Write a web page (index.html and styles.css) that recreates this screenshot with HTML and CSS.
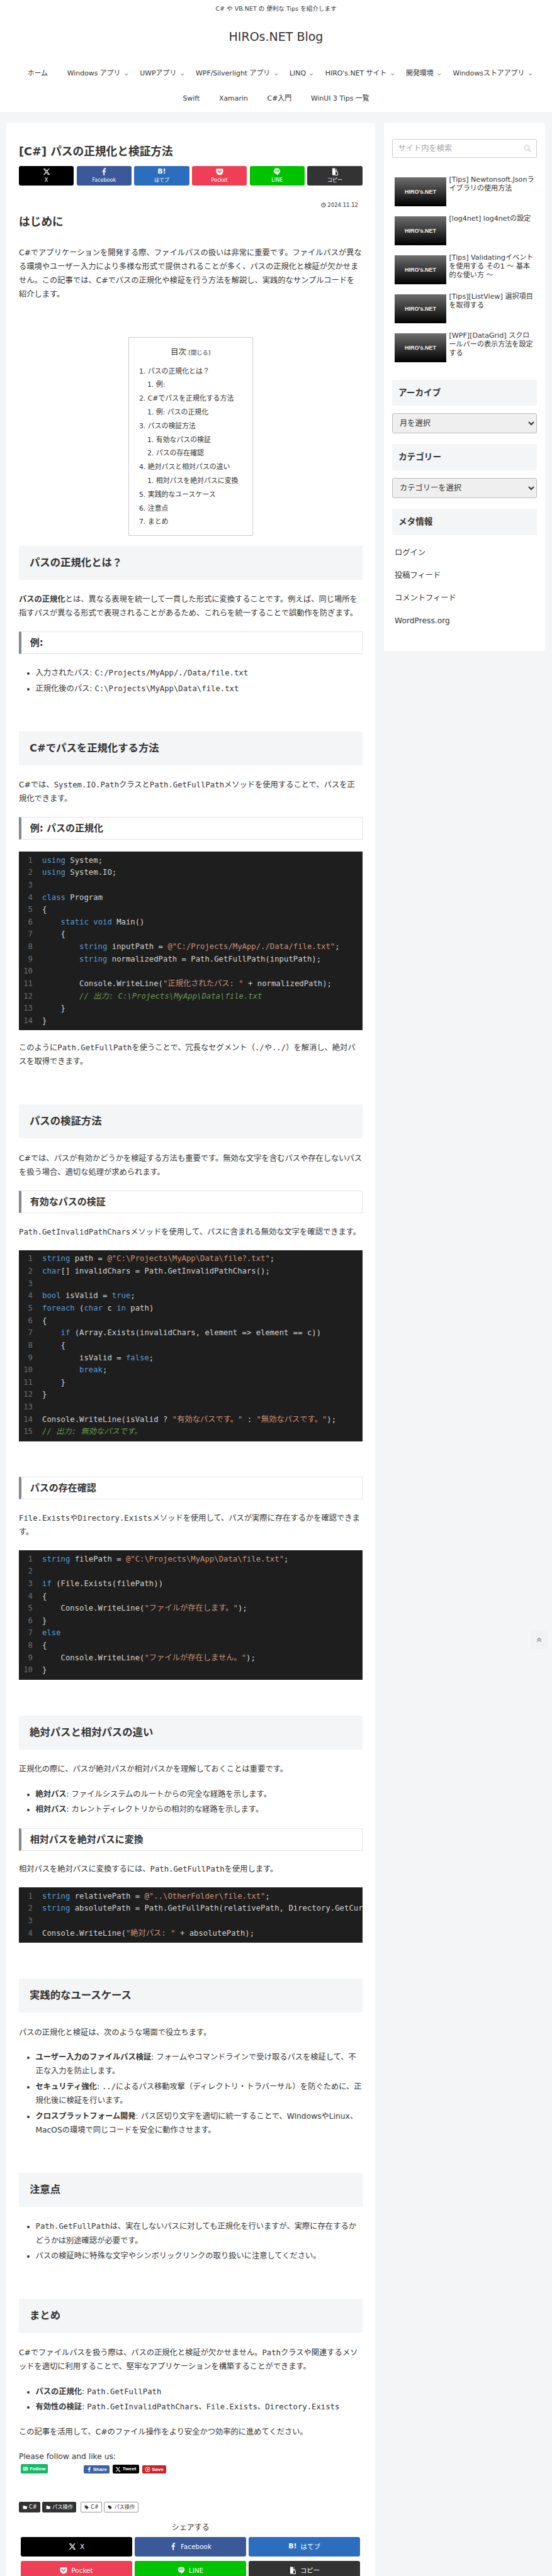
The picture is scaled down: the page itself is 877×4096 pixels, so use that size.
FILE: index.html
```html
<!DOCTYPE html>
<html lang="ja">
<head>
    <meta charset="UTF-8">
    <meta name="viewport" content="width=device-width, initial-scale=1.0">
    <title>[C#] パスの正規化と検証方法 | HIROs.NET Blog</title>
    <link rel="stylesheet" href="styles.css">
</head>
<body>
    <!-- icons used more than once -->
    <svg class="sprite" xmlns="http://www.w3.org/2000/svg">
        <symbol id="i-x" viewBox="0 0 24 24"><path fill="currentColor" d="M18.24 2.25h3.31l-7.23 8.26 8.5 11.24h-6.65l-5.21-6.82-5.97 6.82H1.68l7.73-8.84L1.25 2.25h6.83l4.71 6.23zm-1.16 17.52h1.83L7.08 4.13H5.12z"/></symbol>
        <symbol id="i-fb" viewBox="0 0 24 24"><path fill="currentColor" d="M14.2 23.5V13.1h3.4l.6-4.2h-4V6.4c0-1.2.4-2 2.1-2h2.1V.7C18 .6 16.9.5 15.6.5c-3 0-5.1 1.9-5.1 5.2v3.2H7v4.2h3.5v10.4z"/></symbol>
        <symbol id="i-pocket" viewBox="0 0 24 24"><path fill="currentColor" d="M3.5 2.5h17A2.5 2.5 0 0 1 23 5v6.5a11 11 0 0 1-22 0V5a2.500 2.500 0 0 1 2.500-2.500z"/><path fill="none" stroke="#ef3f56" stroke-width="3.2" stroke-linecap="round" stroke-linejoin="round" d="M7 9.500l5 5 5-5"/></symbol>
        <symbol id="i-line" viewBox="0 0 24 24"><path fill="currentColor" d="M12 1c6 0 10.500 3.900 10.500 9 0 5-5.500 9.500-10.500 13 .5-2 .3-3.300-.8-3.700C6 18.800 1.500 15 1.500 10 1.500 4.900 6 1 12 1z"/><text x="12" y="12.500" text-anchor="middle" class="line-mark">LINE</text></symbol>
        <symbol id="i-copy" viewBox="0 0 24 24"><path fill="currentColor" d="M4 1h9v7h6v3h-7v12H4z"/><path fill="none" stroke="currentColor" stroke-width="2" d="M13 12h6l2 2v9h-8z"/><path fill="currentColor" d="M15 2l4 4h-4z"/></symbol>
        <symbol id="i-folder" viewBox="0 0 24 24"><path fill="currentColor" d="M2 5a2 2 0 0 1 2-2h5l3 3h8a2 2 0 0 1 2 2v11a2 2 0 0 1-2 2H4a2 2 0 0 1-2-2z"/></symbol>
        <symbol id="i-tag" viewBox="0 0 24 24"><path fill="currentColor" d="M2 3h10l10 10-9 9L2 12z"/></symbol>
    </svg>

    <header class="site-header">
        <p class="tagline">C# や VB.NET の 便利な Tips を紹介します</p>
        <div class="logo">HIROs.NET Blog</div>
        <nav class="nav">
            <a class="nav-item">ホーム</a>
            <a class="nav-item has-sub">Windows アプリ</a>
            <a class="nav-item has-sub">UWPアプリ</a>
            <a class="nav-item has-sub">WPF/Silverlight アプリ</a>
            <a class="nav-item has-sub">LINQ</a>
            <a class="nav-item has-sub">HIRO's.NET サイト</a>
            <a class="nav-item has-sub">開発環境</a>
            <a class="nav-item has-sub">Windowsストアアプリ</a>
            <a class="nav-item">Swift</a>
            <a class="nav-item">Xamarin</a>
            <a class="nav-item">C#入門</a>
            <a class="nav-item">WinUI 3 Tips 一覧</a>
        </nav>
    </header>

    <div class="wrap">
        <main class="main">
            <h1 class="entry-title">[C#] パスの正規化と検証方法</h1>

            <div class="sns-top">
                <a class="sns-btn x"><svg><use href="#i-x"/></svg><span>X</span></a>
                <a class="sns-btn fb"><svg><use href="#i-fb"/></svg><span>Facebook</span></a>
                <a class="sns-btn hb"><b>B!</b><span>はてブ</span></a>
                <a class="sns-btn pk"><svg><use href="#i-pocket"/></svg><span>Pocket</span></a>
                <a class="sns-btn ln"><svg><use href="#i-line"/></svg><span>LINE</span></a>
                <a class="sns-btn cp"><svg><use href="#i-copy"/></svg><span>コピー</span></a>
            </div>

            <div class="post-date">
                <svg viewBox="0 0 24 24"><circle cx="12" cy="12" r="9.500" fill="none" stroke="currentColor" stroke-width="3"/><path fill="none" stroke="currentColor" stroke-width="2.500" d="M12 5v7h5"/></svg>
                2024.11.12
            </div>

            <h2 class="intro-title">はじめに</h2>
            <p>C#でアプリケーションを開発する際、ファイルパスの扱いは非常に重要です。ファイルパスが異なる環境やユーザー入力により多様な形式で提供されることが多く、パスの正規化と検証が欠かせません。この記事では、C#でパスの正規化や検証を行う方法を解説し、実践的なサンプルコードを紹介します。</p>

            <div class="toc">
                <div class="toc-title">目次 <small>[閉じる]</small></div>
                <ol>
                    <li>パスの正規化とは？
                        <ol><li>例:</li></ol>
                    </li>
                    <li>C#でパスを正規化する方法
                        <ol><li>例: パスの正規化</li></ol>
                    </li>
                    <li>パスの検証方法
                        <ol><li>有効なパスの検証</li><li>パスの存在確認</li></ol>
                    </li>
                    <li>絶対パスと相対パスの違い
                        <ol><li>相対パスを絶対パスに変換</li></ol>
                    </li>
                    <li>実践的なユースケース</li>
                    <li>注意点</li>
                    <li>まとめ</li>
                </ol>
            </div>

            <h2 class="section first">パスの正規化とは？</h2>
            <p><strong>パスの正規化</strong>とは、異なる表現を統一して一貫した形式に変換することです。例えば、同じ場所を指すパスが異なる形式で表現されることがあるため、これらを統一することで誤動作を防ぎます。</p>

            <h3 class="sub">例:</h3>
            <ul>
                <li>入力されたパス: <code>C:/Projects/MyApp/./Data/file.txt</code></li>
                <li>正規化後のパス: <code>C:\Projects\MyApp\Data\file.txt</code></li>
            </ul>

            <h2 class="section">C#でパスを正規化する方法</h2>
            <p>C#では、<code>System.IO.Path</code>クラスと<code>Path.GetFullPath</code>メソッドを使用することで、パスを正規化できます。</p>

            <h3 class="sub">例: パスの正規化</h3>
            <div class="code-block">
                <div class="nums">1<br>2<br>3<br>4<br>5<br>6<br>7<br>8<br>9<br>10<br>11<br>12<br>13<br>14</div>
<pre><span class="k">using</span> System;
<span class="k">using</span> System.IO;

<span class="k">class</span> Program
{
    <span class="k">static</span> <span class="k">void</span> Main()
    {
        <span class="k">string</span> inputPath = <span class="s">@"C:/Projects/MyApp/./Data/file.txt"</span>;
        <span class="k">string</span> normalizedPath = Path.GetFullPath(inputPath);

        Console.WriteLine(<span class="s">"正規化されたパス: "</span> + normalizedPath);
        <span class="c">// 出力: C:\Projects\MyApp\Data\file.txt</span>
    }
}</pre>
            </div>
            <p>このように<code>Path.GetFullPath</code>を使うことで、冗長なセグメント（<code>./</code>や<code>../</code>）を解消し、絶対パスを取得できます。</p>

            <h2 class="section">パスの検証方法</h2>
            <p>C#では、パスが有効かどうかを検証する方法も重要です。無効な文字を含むパスや存在しないパスを扱う場合、適切な処理が求められます。</p>

            <h3 class="sub">有効なパスの検証</h3>
            <p><code>Path.GetInvalidPathChars</code>メソッドを使用して、パスに含まれる無効な文字を確認できます。</p>
            <div class="code-block">
                <div class="nums">1<br>2<br>3<br>4<br>5<br>6<br>7<br>8<br>9<br>10<br>11<br>12<br>13<br>14<br>15</div>
<pre><span class="k">string</span> path = <span class="s">@"C:\Projects\MyApp\Data\file?.txt"</span>;
<span class="k">char</span>[] invalidChars = Path.GetInvalidPathChars();

<span class="k">bool</span> isValid = <span class="k">true</span>;
<span class="k">foreach</span> (<span class="k">char</span> c <span class="k">in</span> path)
{
    <span class="k">if</span> (Array.Exists(invalidChars, element =&gt; element == c))
    {
        isValid = <span class="k">false</span>;
        <span class="k">break</span>;
    }
}

Console.WriteLine(isValid ? <span class="s">"有効なパスです。"</span> : <span class="s">"無効なパスです。"</span>);
<span class="c">// 出力: 無効なパスです。</span></pre>
            </div>

            <h3 class="sub spaced">パスの存在確認</h3>
            <p><code>File.Exists</code>や<code>Directory.Exists</code>メソッドを使用して、パスが実際に存在するかを確認できます。</p>
            <div class="code-block">
                <div class="nums">1<br>2<br>3<br>4<br>5<br>6<br>7<br>8<br>9<br>10</div>
<pre><span class="k">string</span> filePath = <span class="s">@"C:\Projects\MyApp\Data\file.txt"</span>;

<span class="k">if</span> (File.Exists(filePath))
{
    Console.WriteLine(<span class="s">"ファイルが存在します。"</span>);
}
<span class="k">else</span>
{
    Console.WriteLine(<span class="s">"ファイルが存在しません。"</span>);
}</pre>
            </div>

            <h2 class="section">絶対パスと相対パスの違い</h2>
            <p>正規化の際に、パスが絶対パスか相対パスかを理解しておくことは重要です。</p>
            <ul>
                <li><strong>絶対パス</strong>: ファイルシステムのルートからの完全な経路を示します。</li>
                <li><strong>相対パス</strong>: カレントディレクトリからの相対的な経路を示します。</li>
            </ul>

            <h3 class="sub">相対パスを絶対パスに変換</h3>
            <p>相対パスを絶対パスに変換するには、<code>Path.GetFullPath</code>を使用します。</p>
            <div class="code-block">
                <div class="nums">1<br>2<br>3<br>4</div>
<pre><span class="k">string</span> relativePath = <span class="s">@"..\OtherFolder\file.txt"</span>;
<span class="k">string</span> absolutePath = Path.GetFullPath(relativePath, Directory.GetCurrentDirectory());

Console.WriteLine(<span class="s">"絶対パス: "</span> + absolutePath);</pre>
            </div>

            <h2 class="section">実践的なユースケース</h2>
            <p>パスの正規化と検証は、次のような場面で役立ちます。</p>
            <ul>
                <li><strong>ユーザー入力のファイルパス検証</strong>: フォームやコマンドラインで受け取るパスを検証して、不正な入力を防止します。</li>
                <li><strong>セキュリティ強化</strong>: <code>../</code>によるパス移動攻撃（ディレクトリ・トラバーサル）を防ぐために、正規化後に検証を行います。</li>
                <li><strong>クロスプラットフォーム開発</strong>: パス区切り文字を適切に統一することで、WindowsやLinux、MacOSの環境で同じコードを安全に動作させます。</li>
            </ul>

            <h2 class="section">注意点</h2>
            <ul>
                <li><code>Path.GetFullPath</code>は、実在しないパスに対しても正規化を行いますが、実際に存在するかどうかは別途確認が必要です。</li>
                <li>パスの検証時に特殊な文字やシンボリックリンクの取り扱いに注意してください。</li>
            </ul>

            <h2 class="section">まとめ</h2>
            <p>C#でファイルパスを扱う際は、パスの正規化と検証が欠かせません。<code>Path</code>クラスや関連するメソッドを適切に利用することで、堅牢なアプリケーションを構築することができます。</p>
            <ul>
                <li><strong>パスの正規化</strong>: <code>Path.GetFullPath</code></li>
                <li><strong>有効性の検証</strong>: <code>Path.GetInvalidPathChars</code>、<code>File.Exists</code>、<code>Directory.Exists</code></li>
            </ul>
            <p>この記事を活用して、C#のファイル操作をより安全かつ効率的に進めてください。</p>
            <p class="follow-label">Please follow and like us:</p>

            <div class="follow-row">
                <a class="follow-btn mail">
                    <svg viewBox="0 0 24 24"><path fill="#d7f7e4" d="M1 4h22v16H1z"/><path fill="none" stroke="#14b866" stroke-width="2" d="M1 5l11 9 11-9M1 19l8-7M23 19l-8-7"/></svg>
                    Follow
                </a>
                <a class="follow-btn share"><svg><use href="#i-fb"/></svg>Share</a>
                <a class="follow-btn tweet"><svg><use href="#i-x"/></svg>Tweet</a>
                <a class="follow-btn save">
                    <svg viewBox="0 0 24 24"><circle cx="12" cy="12" r="10" fill="none" stroke="currentColor" stroke-width="2.500"/><path fill="none" stroke="currentColor" stroke-width="2.500" d="M10 20l2.500-10M8.500 12c-1-4 6-6 7.500-2 1 3-3 6-5 3"/></svg>
                    Save
                </a>
            </div>

            <div class="taxonomy">
                <a class="cat"><svg><use href="#i-folder"/></svg>C#</a>
                <a class="cat"><svg><use href="#i-folder"/></svg>パス操作</a>
                <a class="tag first-tag"><svg><use href="#i-tag"/></svg>C#</a>
                <a class="tag"><svg><use href="#i-tag"/></svg>パス操作</a>
            </div>

            <div class="share-label">シェアする</div>
            <div class="sns-bottom">
                <a class="sns-wide x"><svg><use href="#i-x"/></svg>X</a>
                <a class="sns-wide fb"><svg><use href="#i-fb"/></svg>Facebook</a>
                <a class="sns-wide hb"><b>B!</b>はてブ</a>
                <a class="sns-wide pk"><svg><use href="#i-pocket"/></svg>Pocket</a>
                <a class="sns-wide ln"><svg><use href="#i-line"/></svg>LINE</a>
                <a class="sns-wide cp"><svg><use href="#i-copy"/></svg>コピー</a>
            </div>
        </main>

        <aside class="sidebar">
            <div class="search">
                <span>サイト内を検索</span>
                <svg viewBox="0 0 24 24"><circle cx="10" cy="10" r="7.500" fill="none" stroke="currentColor" stroke-width="4"/><path stroke="currentColor" stroke-width="5" stroke-linecap="round" d="M16 16l5 5"/></svg>
            </div>

            <div class="recent">
                <a class="recent-item"><div class="thumb">HIRO's.NET</div><div class="recent-text">[Tips] Newtonsoft.Jsonライブラリの使用方法</div></a>
                <a class="recent-item"><div class="thumb">HIRO's.NET</div><div class="recent-text">[log4net] log4netの設定</div></a>
                <a class="recent-item"><div class="thumb">HIRO's.NET</div><div class="recent-text">[Tips] Validatingイベントを使用する その1 ～ 基本的な使い方 ～</div></a>
                <a class="recent-item"><div class="thumb">HIRO's.NET</div><div class="recent-text">[Tips][ListView] 選択項目を取得する</div></a>
                <a class="recent-item"><div class="thumb">HIRO's.NET</div><div class="recent-text">[WPF][DataGrid] スクロールバーの表示方法を設定する</div></a>
            </div>

            <h3 class="widget-title">アーカイブ</h3>
            <select class="widget-select"><option>月を選択</option></select>

            <h3 class="widget-title">カテゴリー</h3>
            <select class="widget-select"><option>カテゴリーを選択</option></select>

            <h3 class="widget-title">メタ情報</h3>
            <ul class="meta-list">
                <li>ログイン</li>
                <li>投稿フィード</li>
                <li>コメントフィード</li>
                <li>WordPress.org</li>
            </ul>
        </aside>
    </div>

    <!-- go to top button -->
    <a class="go-top">
        <svg viewBox="0 0 24 24"><path fill="none" stroke="currentColor" stroke-width="3" d="M4 12l8-8 8 8M4 20l8-8 8 8"/></svg>
    </a>
</body>
</html>
```
FILE: styles.css
```css
html {
    height: 4096px;
    overflow: hidden;
}

body {
    margin: 0;
    height: 4096px;
    overflow: hidden;
    position: relative;
    background-color: #f4f5f7;
    color: #333;
    font-family: "DejaVu Sans", "Noto Sans CJK JP", sans-serif;
    font-size: 12.28px;
    line-height: 22.1px;
}

.sprite {
    display: none;
}

.line-mark {
    font-family: "Liberation Sans", sans-serif;
    font-size: 6px;
    font-weight: bold;
    fill: #00c300;
}

/* header */
.site-header {
    background-color: #fff;
    text-align: center;
}

.tagline {
    margin: 0;
    font-size: 9.55px;
    line-height: 27px;
}

.logo {
    font-size: 19px;
    line-height: 63.4px;
    padding-bottom: 6.1px;
}

.nav {
    display: flex;
    flex-wrap: wrap;
    justify-content: center;
    max-width: 856px;
    margin: 0 auto;
    font-size: 10.9px;
    line-height: 40.9px;
}

.nav-item {
    position: relative;
    padding: 0 15.4px;
}

.has-sub::after {
    content: "";
    position: absolute;
    right: 4.5px;
    top: 18.5px;
    width: 2.5px;
    height: 2.5px;
    border-right: 1px solid #888;
    border-bottom: 1px solid #888;
    transform: rotate(45deg);
}

/* columns */
.wrap {
    display: flex;
    align-items: flex-start;
    padding: 16.5px 0 0 9.5px;
}

.main {
    box-sizing: border-box;
    width: 586.5px;
    padding: 33px 20.5px 40px;
    background-color: #fff;
    border-radius: 4px;
}

.sidebar {
    box-sizing: border-box;
    width: 256px;
    height: 840px;
    margin-left: 14px;
    padding: 26.4px 13.5px 0 13px;
    background-color: #fff;
    border-radius: 4px;
}

/* article head */
.entry-title {
    margin: 0;
    font-size: 17.7px;
    line-height: 26px;
    font-weight: bold;
}

.sns-top {
    display: flex;
    gap: 4.5px;
    margin-top: 10.6px;
}

.sns-btn {
    flex: 1;
    display: flex;
    flex-direction: column;
    align-items: center;
    height: 30.4px;
    padding-top: 3px;
    box-sizing: border-box;
    border-radius: 3px;
    color: #fff;
    font-size: 8px;
    line-height: 11px;
}

.sns-btn svg {
    width: 12px;
    height: 12px;
    margin-bottom: 2px;
}

.sns-btn b {
    height: 12px;
    margin-bottom: 2px;
    font-size: 11px;
    line-height: 12px;
}

.x { background-color: #000; }
.fb { background-color: #3b5998; }
.hb { background-color: #2c6ebd; }
.pk { background-color: #ef3f56; }
.ln { background-color: #00c300; }
.cp { background-color: #333; }

.post-date {
    display: flex;
    justify-content: flex-end;
    align-items: center;
    gap: 2px;
    margin-top: 25px;
    padding-right: 6.5px;
    font-size: 8.5px;
    line-height: 12px;
}

.post-date svg {
    width: 8px;
    height: 8px;
}

.intro-title {
    margin: 9px 0 26px;
    font-size: 17.7px;
    line-height: 24px;
}

/* article body */
p {
    margin: 0 0 17.5px;
}

ul {
    margin: 0 0 17.5px;
    padding-left: 26.5px;
}

li + li {
    margin-top: 2.6px;
}

code {
    font-family: "DejaVu Sans Mono", "Noto Sans CJK JP", monospace;
    font-size: 12.28px;
}

.section {
    margin: 57px 0 20.5px;
    padding: 0 17px;
    height: 54px;
    border-radius: 2px;
    background-color: #f3f5f6;
    font-size: 16.37px;
    line-height: 54px;
}

.section.first {
    margin-top: 16px;
}

.sub {
    margin: 18px 0 18.5px;
    height: 36px;
    box-sizing: border-box;
    padding-left: 13.800px;
    border: 1px solid #e4e4e4;
    border-left: 4.7px solid #888;
    font-size: 15px;
    line-height: 34px;
}

.sub.spaced {
    margin-top: 56.5px;
}

/* table of contents */
.toc {
    box-sizing: border-box;
    width: 198px;
    height: 316px;
    margin: 56.6px auto 0;
    padding-top: 13px;
    border: 1px solid #ccc;
    font-size: 10.9px;
    line-height: 21.8px;
}

.toc-title {
    margin-bottom: 8px;
    text-align: center;
    font-size: 12.28px;
}

.toc-title small {
    font-size: 9.2px;
}

.toc ol {
    margin: 0;
    padding-left: 30px;
}

.toc ol ol {
    padding-left: 13px;
}

.toc li + li {
    margin-top: 0;
}

/* code */
.code-block {
    display: flex;
    margin: 18px 0 17px;
    padding: 4.7px 0;
    background-color: #1e1e1e;
    color: #d4d4d4;
    font-family: "DejaVu Sans Mono", "Noto Sans CJK JP", monospace;
    font-size: 12.28px;
    line-height: 19.64px;
}

.nums {
    flex: none;
    width: 22px;
    margin-right: 15px;
    text-align: right;
    color: #6e7070;
}

pre {
    flex: 1;
    min-width: 0;
    margin: 0;
    overflow: hidden;
    font: inherit;
}

.k { color: #569cd6; }
.s { color: #ce9178; }
.c { color: #6a9955; font-style: italic; }

/* follow buttons */
.follow-label {
    margin: 13px 0 1px;
}

.follow-row {
    display: flex;
    align-items: flex-start;
    margin-left: 3px;
}

.follow-btn {
    display: flex;
    align-items: center;
    justify-content: center;
    gap: 2px;
    width: 41.6px;
    height: 13px;
    margin-top: 2px;
    margin-left: 5px;
    border-radius: 2px;
    color: #fff;
    font-family: "Liberation Sans", sans-serif;
    font-size: 8px;
    font-weight: bold;
}

.follow-btn svg {
    width: 9px;
    height: 9px;
}

.mail {
    width: 42.6px;
    height: 15px;
    margin: 0 52px 0 0;
    background-color: #14b866;
}

.share { background-color: #3b5fa8; }
.tweet { background-color: #000; height: 14px; margin-top: 1px; }
.save { background-color: #cb2027; width: 38.5px; }

/* categories and tags */
.taxonomy {
    display: flex;
    gap: 3px;
    margin-top: 45px;
    font-size: 8.2px;
    line-height: 15px;
}

.cat,
.tag {
    display: flex;
    align-items: center;
    gap: 3px;
    height: 17px;
    box-sizing: border-box;
    padding: 0 4.5px;
    border-radius: 2px;
    border: 1px solid #333;
    background-color: #333;
    color: #fff;
}

.tag {
    border-color: #999;
    background-color: #fff;
    color: #333;
}

.first-tag {
    margin-left: 4px;
}

.cat svg,
.tag svg {
    width: 7.5px;
    height: 7.5px;
}

/* bottom share */
.share-label {
    margin: 13.7px 0 4.8px;
    text-align: center;
    font-size: 12px;
    line-height: 20px;
}

.sns-bottom {
    display: grid;
    grid-template-columns: repeat(3, 177px);
    gap: 6.6px 4px;
    margin-left: 3px;
}

.sns-wide {
    display: flex;
    justify-content: center;
    align-items: center;
    gap: 6px;
    height: 31px;
    border-radius: 3px;
    color: #fff;
    font-size: 10.4px;
}

.sns-wide svg {
    width: 12px;
    height: 12px;
}

.sns-wide b {
    font-size: 11px;
}

/* sidebar */
.search {
    display: flex;
    justify-content: space-between;
    align-items: center;
    box-sizing: border-box;
    height: 30px;
    padding: 0 8px 0 8.5px;
    border: 1px solid #ccc;
    border-radius: 3px;
    color: #a5a5a5;
}

.search svg {
    width: 12px;
    height: 12px;
    color: #ddd;
}

.recent {
    margin-top: 30.5px;
    padding: 0 4px;
}

.recent-item {
    display: flex;
    gap: 4.5px;
    height: 46px;
    margin-bottom: 16px;
}

.thumb {
    flex: none;
    width: 82px;
    height: 46px;
    background: linear-gradient(#6e6e6e, #000);
    color: #f4f4f4;
    font-family: "Liberation Sans", sans-serif;
    font-size: 9px;
    font-weight: bold;
    line-height: 46px;
    text-align: center;
}

.recent-text {
    margin-top: -3px;
    font-size: 11.1px;
    line-height: 14.3px;
}

.widget-title {
    margin: 28px 0 11.500px;
    padding-left: 10px;
    height: 41.7px;
    border-radius: 2px;
    background-color: #f3f5f6;
    font-size: 13.64px;
    line-height: 40px;
}

.widget-select + .widget-title {
    margin-top: 17.500px;
}

.widget-select {
    display: block;
    width: 100%;
    height: 32px;
    padding: 0 7px;
    border: 1px solid #bbb;
    border-radius: 3px;
    background-color: #efefef;
    color: #333;
    font-family: inherit;
    font-size: 12.28px;
}

.meta-list {
    margin: -1px 0 0;
    padding: 0 4px;
    list-style: none;
    line-height: 36px;
}

.meta-list li + li {
    margin-top: 0;
}

.go-top {
    position: absolute;
    left: 843.6px;
    top: 2593px;
    width: 26px;
    height: 29px;
    display: flex;
    align-items: center;
    justify-content: center;
    background-color: #f1f2f3;
    color: #888;
}

.go-top svg {
    width: 9px;
    height: 9px;
}
```
